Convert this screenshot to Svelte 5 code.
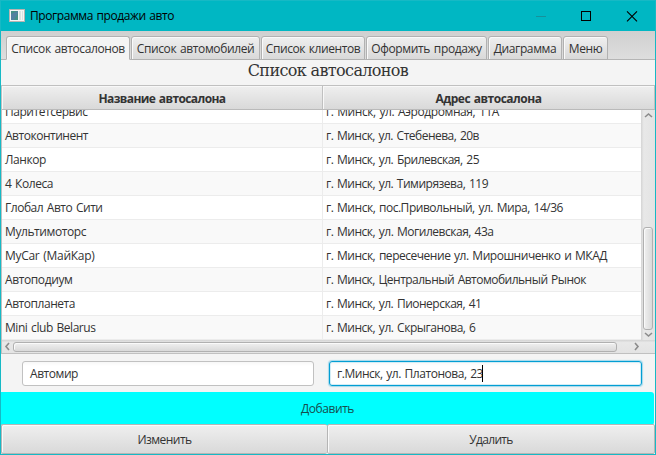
<script>
  const tabs = [
    { label: 'Список автосалонов', w: 124, t: 113.5 },
    { label: 'Список автомобилей', w: 129, t: 117.5 },
    { label: 'Список клиентов', w: 104, t: 94.5 },
    { label: 'Оформить продажу', w: 121, t: 110.5 },
    { label: 'Диаграмма', w: 74, t: 62.5 },
    { label: 'Меню', w: 45, t: 33.5 }
  ];
  const rows = [
    ['Паритетсервис', 82.5, 'г. Минск, ул. Аэродромная, 11А', 173],
    ['Автоконтинент', 83, 'г. Минск, ул. Стебенева, 20в', 153],
    ['Ланкор', 41, 'г. Минск, ул. Брилевская, 25', 153],
    ['4 Колеса', 48, 'г. Минск, ул. Тимирязева, 119', 162],
    ['Глобал Авто Сити', 97.5, 'г. Минск, пос.Привольный, ул. Мира, 14/36', 237],
    ['Мультимоторс', 81, 'г. Минск, ул. Могилевская, 43а', 167.5],
    ['MyCar (МайКар)', 89.5, 'г. Минск, пересечение ул. Мирошниченко и МКАД', 281],
    ['Автоподиум', 67.5, 'г. Минск, Центральный Автомобильный Рынок', 260],
    ['Автопланета', 70, 'г. Минск, ул. Пионерская, 41', 155.5],
    ['Mini club Belarus', 90.5, 'г. Минск, ул. Скрыганова, 6', 149.5]
  ];

  // Adjusts tracking so that a label takes the given advance width.
  function fit(node, width) {
    const n = node.textContent.length;
    const natural = node.getBoundingClientRect().width;
    node.style.letterSpacing = `${(width - natural) / n}px`;
  }
</script>

<div class="window">
  <header class="titlebar">
    <svg class="app" width="16" height="14" viewBox="0 0 16 14">
      <rect x=".5" y=".5" width="15" height="12" fill="#f5f5f5" stroke="#b9b4b2" />
      <rect x="2" y="2" width="7" height="9" fill="#438f85" />
      <path d="M2 11V5L9 2v2L5 11z" fill="#5280a0" />
      <rect x="10" y="2" width="2" height="9" fill="#d8e3e1" />
      <rect x="13" y="2" width="1" height="9" fill="#d8e3e1" />
    </svg>
    <span class="caption" use:fit={144}>Программа продажи авто</span>
    <svg class="controls" width="110" height="14" viewBox="0 0 110 14" fill="none" stroke="#000" shape-rendering="crispEdges">
      <path d="M0 7.5h10" stroke="#16919b" />
      <rect x="45.5" y="2.5" width="9" height="9" />
      <path d="M91 2.3l10 10M101 2.3l-10 10" shape-rendering="auto" stroke-width="1.1" />
    </svg>
  </header>

  <nav class="tabs">
    {#each tabs as tab, i}
      <div class="tab" class:active={i === 0} style:width="{tab.w}px"><span use:fit={tab.t}>{tab.label}</span></div>
    {/each}
  </nav>

  <h1><span use:fit={160.5}>Список автосалонов</span></h1>

  <section class="table">
    <div class="thead">
      <div class="th first"><span use:fit={127}>Название автосалона</span></div>
      <div class="th"><span use:fit={106}>Адрес автосалона</span></div>
    </div>
    <div class="middle">
      <div class="body">
        {#each rows as row}
          <div class="row">
            <div class="cell first"><span use:fit={row[1]}>{row[0]}</span></div>
            <div class="cell"><span use:fit={row[3]}>{row[2]}</span></div>
          </div>
        {/each}
      </div>
      <div class="vbar">
        <svg width="9" height="6" viewBox="0 0 9 6"><path d="M1 5l3.5-3L8 5" /></svg>
        <div class="vthumb"></div>
        <svg width="9" height="6" viewBox="0 0 9 6"><path d="M1 1l3.5 3L8 1" /></svg>
      </div>
    </div>
    <div class="hbar">
      <svg width="6" height="9" viewBox="0 0 6 9"><path d="M5 1L2 4.5 5 8" /></svg>
      <div class="hthumb"></div>
      <svg class="right" width="6" height="9" viewBox="0 0 6 9"><path d="M1 1l3 3.500L1 8" /></svg>
    </div>
  </section>

  <div class="fields">
    <div class="field name"><span use:fit={48}>Автомир</span></div>
    <div class="field focused"><span use:fit={146}>г.Минск, ул. Платонова, 23</span><i></i></div>
  </div>
  <div class="add"><span use:fit={53}>Добавить</span></div>
  <div class="actions">
    <div class="button"><span use:fit={54}>Изменить</span></div>
    <div class="button"><span use:fit={43.5}>Удалить</span></div>
  </div>
</div>

<style>
  :global(body) { margin: 0; overflow: hidden; }
  .window, .window * { box-sizing: border-box; }
  .window {
    width: 656px; height: 455px; display: flex; flex-direction: column;
    border: 1px solid #16b9c5; background: #f4f4f4; color: #333;
    font: 12px/16px "Open Sans", "Noto Sans", sans-serif; word-spacing: 1px; white-space: nowrap; overflow: hidden;
  }
  span { display: inline-block; flex: none; }
  .titlebar { height: 30px; flex: none; background: #00b7c3; display: flex; align-items: center; padding-left: 8px; color: #000; }
  .caption { margin-left: 5px; }
  .controls { margin-left: auto; margin-right: 9px; }
  .tabs {
    height: 29px; flex: none; padding: 5px 0 0 5px; display: flex; gap: 1px;
    background: linear-gradient(#d0d0d0, #dedede); box-shadow: inset 0 -1px #b5b5b5;
  }
  .tab {
    height: 24px; display: flex; justify-content: center; padding-top: 4px;
    border: 1px solid #b1b1b1; border-radius: 3px 3px 0 0;
    background: linear-gradient(#efefef, #d9d9d9); box-shadow: inset 1px 1px #fafafa;
  }
  .tab.active { background: #f4f4f4; border-bottom-color: #f4f4f4; }
  h1 { margin: 0; height: 25px; flex: none; text-align: center; font: 16px/22px "DejaVu Serif", serif; word-spacing: 0; }
  .table { height: 269px; flex: none; display: flex; flex-direction: column; border: 1px solid #c0c0c0; border-width: 1px 0 1px 1px; background: #fff; }
  .thead { height: 24px; flex: none; display: flex; border-bottom: 1px solid #bababa; font-weight: 700; }
  .th { flex: 1; display: flex; align-items: center; justify-content: center; padding-top: 3px; background: linear-gradient(#efefef, #d9d9d9); box-shadow: inset 1px 1px #f8f8f8; border-right: 1px solid #c0c0c0; }
  .first { flex: 0 0 321px; width: 321px; }
  .middle { height: 230px; flex: none; display: flex; }
  .body { flex: 1; display: flex; flex-direction: column; justify-content: flex-end; overflow: hidden; }
  .row { height: 24px; flex: none; display: flex; background: #fff; border-bottom: 1px solid #ececec; }
  .row:nth-child(even) { background: #f9f9f9; }
  .cell { padding: 4px 0 0 3px; }
  .cell.first { border-right: 1px solid #ececec; }
  .vbar { width: 14px; display: flex; flex-direction: column; align-items: center; padding: 2px 0; background: linear-gradient(90deg, #d4d4d4, #e8e8e8 20%, #e3e3e3); }
  svg path { vector-effect: non-scaling-stroke; }
  .vbar svg, .hbar svg { flex: none; fill: none; stroke: #8c8c8c; stroke-width: 1.6; }
  .vthumb { margin: auto 0 2px; width: 10px; height: 103px; border: 1px solid #b0b0b0; border-radius: 3px; background: linear-gradient(90deg, #f0f0f0, #d9d9d9); box-shadow: inset 1px 1px #fafafa; }
  .hbar { flex: 1; display: flex; align-items: center; padding-left: 2px; background: linear-gradient(#d4d4d4, #e8e8e8 20%, #e3e3e3); }
  .hthumb { margin-left: 3px; width: 604px; height: 10px; border: 1px solid #b0b0b0; border-radius: 3px; background: linear-gradient(#f0f0f0, #d9d9d9); box-shadow: inset 1px 1px #fafafa; }
  .hbar .right { margin-left: 17px; }
  .fields { height: 38px; flex: none; display: flex; gap: 15px; padding: 7px 0 0 21px; }
  .field { width: 313px; height: 25px; background: linear-gradient(#f7f7f7, #fff 4px); border: 1px solid #c1c1c1; border-radius: 3px; padding: 4px 7px; display: flex; }
  .name { width: 292px; }
  .focused { border-color: #039ed3; box-shadow: 0 0 1px 1px #a5d9ec, inset 0 0 0 1px #d3edf6; }
  .focused i { width: 1px; height: 17px; margin-top: -1px; background: #000; margin-left: -1px; }
  .add { height: 33px; flex: none; margin-right: 1px; display: flex; justify-content: center; align-items: center; background: #0ff; border-radius: 0 3px 3px 0; color: #174d4d; padding-top: 1px; }
  .actions { flex: 1; display: flex; margin-top: -1px; }
  .button { width: 327px; display: flex; justify-content: center; align-items: center; border: 1px solid #b5b5b5; border-radius: 2px; background: linear-gradient(#efefef, #d9d9d9); box-shadow: inset 1px 1px #fafafa; padding-top: 2px; }
  .button:first-child { border-right: 0; width: 326px; }
  .button:last-child { width: 328px; }
</style>
